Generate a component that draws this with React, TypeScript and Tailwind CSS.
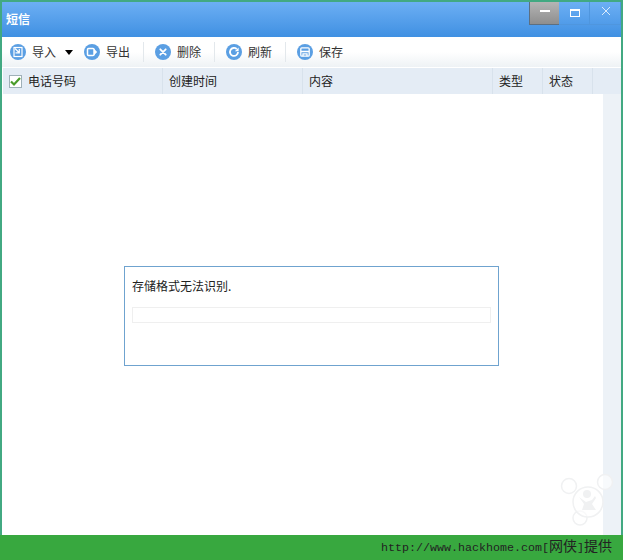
const cjk = "font-['Noto_Sans_CJK_SC','Liberation_Sans',sans-serif]";

function RoundIcon({ children }: { children: React.ReactNode }) {
  return (
    <svg width="16" height="16" viewBox="0 0 16 16" className="shrink-0">
      <circle cx="8" cy="8" r="8" fill="#5b9fe3" />
      {children}
    </svg>
  );
}

function ToolItem({ icon, label, className = "" }: { icon: React.ReactNode; label: string; className?: string }) {
  return (
    <div className={`flex items-center gap-1.5 ${className}`}>
      <RoundIcon>{icon}</RoundIcon>
      <span className="text-xs text-[#333]">{label}</span>
    </div>
  );
}

function Sep() {
  return <div className="w-px h-5 bg-[#e3e8ec] ml-[13px] mr-[11px] shrink-0" />;
}

function HeaderCell({ w, label, children }: { w: string; label?: string; children?: React.ReactNode }) {
  return (
    <div className={`${w} shrink-0 h-full flex items-center px-1.5 border-r border-[#d8e2ec] text-xs text-[#222]`}>
      {children}
      {label}
    </div>
  );
}

export default function App() {
  return (
    <div className={`relative w-[623px] h-[560px] flex flex-col overflow-hidden bg-[#38a83f] ${cjk}`}>
      <div className="flex-1 min-h-0 flex flex-col border-x-2 border-t-2 border-[#42a982] bg-white">
        {/* Title bar */}
        <div className="h-[35px] shrink-0 flex justify-between bg-gradient-to-b from-[#6cafF4] to-[#3f90e2]">
          <span className="pl-1 pt-[9px] text-xs font-bold text-white leading-4">短信</span>
          <div className="flex h-[23px]">
            <div className="w-[30px] flex items-center justify-center bg-gradient-to-b from-[#b5b5b5] to-[#8e8e8e] border-l border-b border-[#5d6f80]">
              <div className="w-2.5 h-0.5 bg-white -mt-1" />
            </div>
            <div className="w-[31px] pl-px flex items-center justify-center border-r border-b border-[#4f96de]">
              <div className="w-2.5 h-2 border border-white border-t-2" />
            </div>
            <div className="w-[31px] pl-px flex items-center justify-center border-r border-b border-[#4f96de]">
              <svg width="10" height="10" viewBox="0 0 10 10" stroke="#e8f2fc" strokeWidth="0.9" className="-mt-1">
                <path d="M1 1l8 8M9 1l-8 8" />
              </svg>
            </div>
          </div>
        </div>

        {/* Toolbar */}
        <div className="h-[30px] shrink-0 flex items-center pl-2 bg-gradient-to-b from-white via-white to-[#eef2f5]">
          <ToolItem
            label="导入"
            icon={
              <g fill="none" stroke="#fff" strokeWidth="1.2">
                <rect x="4" y="3.5" width="8" height="9" />
                <path d="M5 4.5l4 4M9.3 5v3.8H5.5" />
              </g>
            }
          />
          <div className="ml-[9px] mr-[11px] w-0 h-0 border-x-[4.5px] border-x-transparent border-t-[5px] border-t-black" />
          <ToolItem
            label="导出"
            icon={
              <g>
                <rect x="3.5" y="4.5" width="6.5" height="7" rx="1" fill="none" stroke="#fff" strokeWidth="1.5" />
                <path d="M10 4.8l3.2 3.2-3.2 3.2z" fill="#fff" />
              </g>
            }
          />
          <Sep />
          <ToolItem
            label="删除"
            icon={<path d="M5.3 5.3l5.4 5.4M10.7 5.3l-5.4 5.4" stroke="#fff" strokeWidth="1.8" strokeLinecap="round" />}
          />
          <Sep />
          <ToolItem
            label="刷新"
            icon={
              <g>
                <path d="M12 8a4 4 0 1 1-1.3-3" fill="none" stroke="#fff" strokeWidth="1.8" />
                <path d="M12.6 3.4v3.8H8.9z" fill="#fff" />
              </g>
            }
          />
          <Sep />
          <ToolItem
            label="保存"
            icon={
              <g fill="none" stroke="#fff" strokeWidth="1.3">
                <rect x="3.8" y="3.8" width="8.4" height="8.4" rx="1" />
                <path d="M3.8 7.5h8.4M6 12.2V9.8h4v2.4" />
              </g>
            }
          />
        </div>

        {/* Header */}
        <div className="h-[26px] mt-px ml-px shrink-0 flex bg-[#e4ecf5]">
          <HeaderCell w="w-[160px]">
            <span className="w-[13px] h-[13px] mr-[6px] flex items-center justify-center bg-white border border-[#9fb0b8]">
              <svg width="11" height="11" viewBox="0 0 11 11">
                <path d="M1 5.5l3 3 6-6.5" fill="none" stroke="#4a9c2a" strokeWidth="2.2" />
              </svg>
            </span>
            电话号码
          </HeaderCell>
          <HeaderCell w="w-[140px]" label="创建时间" />
          <HeaderCell w="w-[190px]" label="内容" />
          <HeaderCell w="w-[50px]" label="类型" />
          <HeaderCell w="w-[50px]" label="状态" />
        </div>

        {/* Body */}
        <div className="flex-1 min-h-0 flex justify-end">
          <div className="w-[18px] bg-[#edf2f7]" />
        </div>
      </div>

      {/* Status bar */}
      <div className="h-[25px] shrink-0 flex items-center justify-end pr-[11px] text-[#222]">
        <span className="font-['Liberation_Mono','Noto_Sans_CJK_SC',monospace] text-[11.67px] whitespace-nowrap">
          http://www.hackhome.com[<span className="text-sm">网侠</span>]<span className="text-sm">提供</span>
        </span>
      </div>

      {/* Dialog overlay */}
      <div className="absolute left-[124px] top-[266px] w-[375px] h-[100px] bg-white border border-[#6fa3cf] px-[7px] pt-[11px]">
        <p className="text-xs leading-4 text-[#222]">存储格式无法识别.</p>
        <div className="mt-[13px] h-4 border border-[#efefef] bg-white" />
      </div>

      {/* Watermark overlay */}
      <svg width="64" height="60" viewBox="0 0 64 60" className="absolute left-[558px] top-[474px]">
        <g fill="#fff" fillOpacity="0.6" stroke="#f0f1f2" strokeWidth="1.5">
          <circle cx="11" cy="12" r="7.5" />
          <circle cx="47" cy="8" r="7.5" />
          <circle cx="22" cy="44" r="7" />
          <circle cx="30" cy="28" r="15" />
        </g>
        <g fill="#f0f1f2">
          <circle cx="29" cy="20" r="4" />
          <path d="M21 23l7 5 6-2 3-4 1 2-4 6 4 6H24l2-6z" />
        </g>
      </svg>
    </div>
  );
}
